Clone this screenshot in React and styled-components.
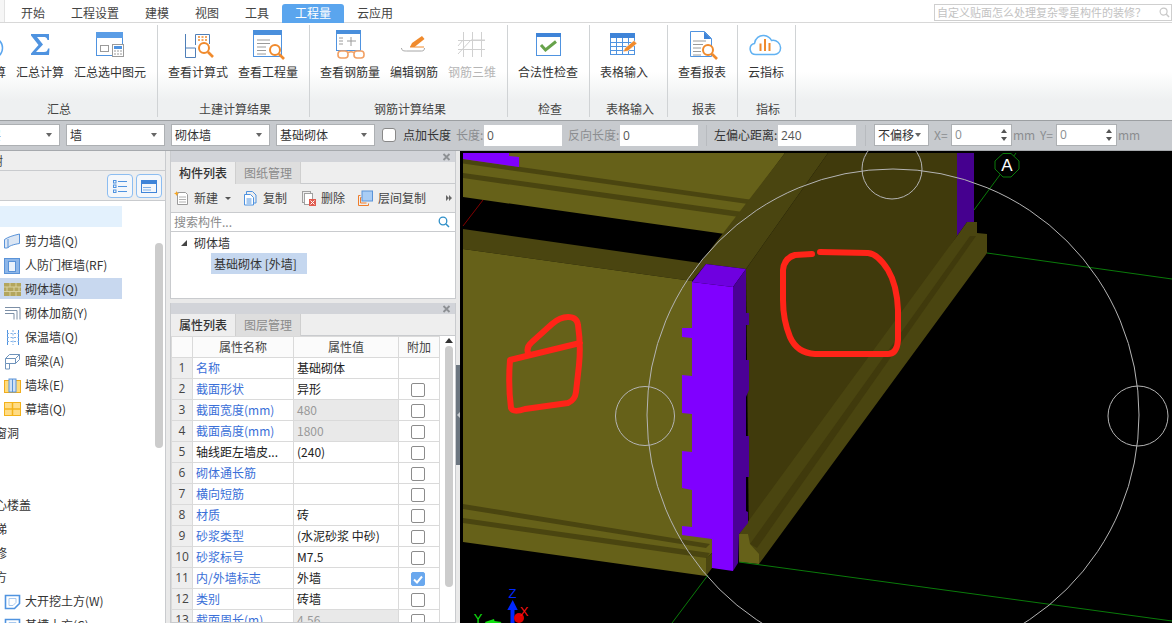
import React from 'react';
import styled, { createGlobalStyle } from 'styled-components';

const Global = createGlobalStyle`
  html, body { margin: 0; padding: 0; background: #fff; overflow: hidden; }
  * { box-sizing: border-box; }
  #root { width: 1172px; height: 623px; overflow: hidden; }
`;
const FONT = `"Noto Sans CJK SC", "Liberation Sans", sans-serif`;

const Page = styled.div`
  width: 1172px; height: 623px; display: flex; flex-direction: column; overflow: hidden;
  font: 12px/16px ${FONT}; color: #222; background: #e9e9e9;
`;
const MenuBar = styled.div`
  height: 23px; flex: none; display: flex; align-items: flex-start; padding-left: 8px; background: #fff;
  border-bottom: 1px solid #d8d8d8; position: relative;
  &::before { content: ''; position: absolute; left: 0; top: 0; width: 4px; height: 22px; background: #f6f6f6; border-right: 1px solid #e2e2e2; }
`;
const Tab = styled.div`
  padding: 0 13px; margin-top: 4px; height: 19px; line-height: 18px; font-size: 12px; color: ${p => (p.$active ? '#fff' : '#444')};
  background: ${p => (p.$active ? '#5aa5ee' : 'transparent')}; border-radius: 3px 3px 0 0;
`;
const HelpBox = styled.div`
  margin: 4px 0 0 auto; width: 238px; height: 17px; border: 1px solid #cfcfcf; background: #fff; color: #c2c2c2;
  font-size: 11px; line-height: 15px; padding-left: 2px; display: flex; justify-content: space-between; align-items: center; padding-right: 1px;
`;
const Ribbon = styled.div`
  height: 97px; flex: none; display: flex; margin-left: -52px; padding-bottom: 3px; padding-top: 2px; width: 1224px;
  background: linear-gradient(#fff 0, #fff 50%, #eef0f1 80%, #eef0f1 100%);
`;
const Group = styled.div`
  display: flex; flex-direction: column; border-right: 1px solid #d0d3d5; padding: 5px ${p => p.$pr ?? 11}px 0 10px;
`;
const GroupItems = styled.div`
  display: flex; gap: 10px; flex: 1;
`;
const Caption = styled.div`
  height: 19px; text-align: center; color: #444; font-size: 12px; line-height: 22px; padding-left: ${p => p.$pl ?? 4}px;
`;
const Item = styled.div`
  display: flex; flex-direction: column; align-items: center; width: ${p => p.$w}px;
  color: ${p => (p.$muted ? '#b5b5b5' : '#333')}; white-space: nowrap;
  svg { display: block; margin-bottom: 4px; flex: none; overflow: visible; }
`;
const OptionBar = styled.div`
  height: 31px; flex: none; display: flex; align-items: center; background: #c7cace; padding-bottom: 1px;
  border-top: 1px solid #9c9fa2; border-bottom: 1px solid #a6a9ad; white-space: nowrap;
`;
const Combo = styled.div`
  flex: none; width: ${p => p.$w || 99}px; height: 22px; margin-left: ${p => p.$ml ?? 6}px; background: #fff; border: 1px solid #adb0b3;
  display: flex; align-items: center; justify-content: space-between; padding: 0 7px 0 3px; color: #333;
  &::after { content: ''; border: 3px solid transparent; border-top: 4px solid #666; border-bottom: 0; }
`;
const Check = styled.div`
  flex: none; width: 14px; height: 14px; margin-left: 7px; border: 1px solid #888; border-radius: 3px; background: #fff;
`;
const Label = styled.span`
  flex: none; width: ${p => p.$w}px; margin-left: ${p => p.$ml}px; color: ${p => (p.$muted ? '#8b8d90' : '#333')};
`;
const TextInput = styled.div`
  flex: none; width: 78px; height: 21px; margin-left: ${p => p.$ml ?? 0}px; background: #fff; padding-left: 3px;
  font-family: "Open Sans", sans-serif; line-height: 21px; color: #555; font-size: 12px;
`;
const VRule = styled.div`
  flex: none; width: 1px; height: 21px; background: #b8bbbf; margin-left: ${p => p.$ml}px;
`;
const Spin = styled.div`
  flex: none; width: 61px; height: 22px; background: #fff; border: 1px solid #adb0b3; display: flex; align-items: center;
  justify-content: space-between; padding: 0 4px 0 3px; color: #8b8d90; font-family: "Open Sans", sans-serif;
`;
const SpinArrows = styled.div`
  display: flex; flex-direction: column; gap: 4px;
  i { display: block; border: 3px solid transparent; border-bottom: 4px solid #555; border-top: 0; }
  i + i { border-top: 4px solid #555; border-bottom: 0; }
`;
const Main = styled.div`
  flex: 1; min-height: 0; display: flex; background: #e9e9e9;
`;
const LeftPanel = styled.div`
  flex: none; width: 166px; margin-right: 4px; background: #fff; border-right: 1px solid #c9cbce; position: relative; overflow: hidden;
  display: flex; flex-direction: column;
`;
const LeftTitle = styled.div`
  height: 20px; flex: none; background: #eeeeee; border-bottom: 1px solid #c9cbce; padding-left: 0; color: #444; line-height: 19px;
  span { margin-left: -33px; display: block; }
`;
const LeftTools = styled.div`
  height: 30px; flex: none; background: #eeeeee; border-bottom: 1px solid #c9cbce; display: flex; justify-content: flex-end; gap: 3px; padding: 3px 3px 0 0;
`;
const ToolBtn = styled.div`
  width: 26px; height: 24px; border: 1px solid #8cbdf1; border-radius: 4px; background: #f4f7fb; display: flex; align-items: center; justify-content: center;
`;
const TreeList = styled.div`
  flex: 1; padding-top: 5px; overflow: hidden;
`;
const TreeRow = styled.div`
  height: 24px;
`;
const TreeBody = styled.div`
  width: 122px; height: 21px; display: flex; align-items: center; background: ${p => p.$bg || 'transparent'}; white-space: nowrap; color: #333;
  svg { flex: none; margin: 1px 3px 0 3px; }
`;
const TopName = styled.span`
  margin-left: -17px;
`;
const LeftThumb = styled.div`
  position: absolute; left: 155px; top: 92px; width: 8px; height: 205px; background: #cccccc; border-radius: 4px;
`;
const MidCol = styled.div`
  flex: none; width: 286px; display: flex; flex-direction: column; gap: 4px;
`;
const Panel = styled.div`
  flex: ${p => (p.$h ? 'none' : '1')}; height: ${p => (p.$h ? `${p.$h}px` : 'auto')}; min-height: 0; display: flex; flex-direction: column; background: #fff; border: solid #c9cbce; border-width: 0 1px 1px 1px; overflow: hidden;
`;
const PanelHead = styled.div`
  height: 11px; flex: none; background: #d2d4d9; display: flex; justify-content: flex-end; align-items: center; padding-right: 4px;
`;
const Tabs = styled.div`
  height: 22px; flex: none; background: #eeeeee; display: flex; border-bottom: 1px solid #c9cbce;
`;
const PanelTab = styled.div`
  width: 65px; text-align: center; line-height: 21px; height: 22px;
  background: ${p => (p.$active ? '#eeeeee' : '#dedede')}; color: ${p => (p.$active ? '#333' : '#8a8a8a')}; border-right: 1px solid #cfcfcf;
  font-weight: ${p => (p.$active ? 500 : 400)};
`;
const Actions = styled.div`
  height: 29px; flex: none; background: #eeeeee; border-bottom: 1px solid #c9cbce; display: flex; align-items: center; padding-left: 3px; color: #444; white-space: nowrap; position: relative;
`;
const Action = styled.div`
  display: flex; align-items: center; gap: 5px; margin-right: ${p => p.$mr}px;
`;
const DropCaret = styled.i`
  display: block; margin-left: 2px; border: 3px solid transparent; border-top: 3px solid #555; border-bottom: 0;
`;
const More = styled.svg`
  margin-left: auto; margin-right: 3px; flex: none;
`;
const SearchRow = styled.div`
  height: 19px; flex: none; display: flex; align-items: center; justify-content: space-between; padding: 0 5px 0 3px; color: #8a8a8a; border-bottom: 1px solid #c9cbce; background: #fff;
`;
const Tree = styled.div`
  flex: 1; padding-top: 2px; position: relative;
`;
const TreeNode = styled.div`
  height: 18px; display: flex; align-items: center; padding-left: 10px; gap: 7px; color: #333;
  i { display: block; width: 0; height: 0; border-left: 6px solid transparent; border-bottom: 6px solid #444; }
`;
const Selected = styled.div`
  margin: 1px 0 0 40px; width: 96px; height: 21px; background: #c5d7ef; padding-left: 3px; line-height: 21px; color: #333; white-space: nowrap;
`;
const TableWrap = styled.div`
  flex: 1; min-height: 0; display: flex; overflow: hidden;
`;
const Table = styled.table`
  flex: none; width: 268px; table-layout: fixed; border-collapse: collapse; align-self: flex-start;
  td, th { height: 21px; padding: 0 0 0 3px; border: 1px solid #dadada; font-weight: 400; white-space: nowrap; overflow: hidden; text-align: left; }
  th { text-align: center; padding: 0; color: #444; background: #fbfbfb; }
`;
const NumCell = styled.td`
  && { background: #eeeeee; color: #444; text-align: center; padding: 0; font-family: "Open Sans", sans-serif; }
`;
const NameCell = styled.td`
  color: ${p => (p.$plain ? '#222' : '#3a6fd8')};
`;
const ValueCell = styled.td`
  background: ${p => (p.$ro ? '#e9e9e9' : '#fff')}; color: ${p => (p.$ro ? '#999' : '#222')};
`;
const AddCell = styled.td`
  && { padding: 0 2px 0 0; text-align: center; }
`;
const Box = styled.span`
  display: inline-flex; vertical-align: middle; align-items: center; justify-content: center; width: 14px; height: 14px; border-radius: 2px; border: 1px solid ${p => (p.$on ? '#6aa8ee' : '#8c8c8c')}; background: ${p => (p.$on ? '#6aa8ee' : '#fff')};
`;
const ScrollCol = styled.div`
  flex: none; width: 16px; padding: 2px 0 0 5px; background: #fff;
  i { display: block; width: 0; height: 0; border: 4px solid transparent; border-bottom: 5px solid #333; border-top: 0; margin-bottom: 3px; }
`;
const ScrollThumb = styled.div`
  width: 8px; height: 241px; background: #cccccc; border-radius: 4px;
`;
const Splitter = styled.div`
  flex: none; width: 4px;
`;
const SplitGrip = styled.div`
  width: 4px; height: 100px; margin-top: 214px; background: #6c7680; display: flex; align-items: center; justify-content: flex-end;
  &::after { content: ''; display: block; border: 3px solid transparent; border-right: 3px solid #c8ccd0; border-left: 0; }
`;
const Canvas = styled.svg`
  flex: none; display: block; background: #000;
`;

/* ribbon icons – drawn in page coordinates via viewBox */
const RIcon = ({ cx, children }) => (
  <svg width="34" height="30" viewBox={`${cx - 17} 30 34 30`} fill="none">{children}</svg>
);
const B = '#4f93e0';
const O = '#f08a2c';
const G = '#9a9a9a';
const Lens = ({ x, y, r = 5 }) => (
  <g stroke={O} strokeWidth="2" fill="#fff">
    <circle cx={x} cy={y} r={r} />
    <path d={`M${x + r - 1} ${y + r - 1}l5 5`} strokeWidth="2.6" />
  </g>
);
const IconCloudCalc = () => (
  <RIcon cx={-18}><circle cx="-8" cy="48" r="10.500" stroke="#5aa5ee" strokeWidth="1.500" /></RIcon>
);
const IconSigma = () => (
  <RIcon cx={40}><path fill={B} d="M31 34H49V40H47.5C47 37.5 45.5 37 43 37H37L43 44.5 36 52H44C46.5 52 47.5 51 48 48.5H49.5L49 55H31V53.5L38.5 45 31 35.5Z" /></RIcon>
);
const IconSumSel = () => (
  <RIcon cx={110}>
    <rect x="96.5" y="32.5" width="26" height="23" stroke={B} />
    <rect x="96" y="32" width="27" height="6" fill="#5a9de6" />
    <rect x="100.5" y="45.5" width="8" height="6" stroke={G} />
    <rect x="112.5" y="44.5" width="11" height="12" fill="#fff" stroke={G} />
    <rect x="114" y="46" width="8" height="3" fill={B} />
    <path d="M114 51h2M117 51h2M120 51h2M114 54h2M117 54h2M120 54h2" stroke={G} />
  </RIcon>
);
const IconCalc = () => (
  <RIcon cx={198}>
    <path d="M185.5 34v23.5h10v-9.500h-10M195.500 45V34.500h14V44" stroke="#4f7fb8" />
    <path d="M198 37h2M201.500 37h2M205 37h2M198 40h2M201.500 40h2M205 40h2" stroke={O} strokeWidth="1.500" />
    <Lens x={204} y={48} />
  </RIcon>
);
const IconQty = () => (
  <RIcon cx={268}>
    <rect x="253.500" y="30.500" width="28" height="26" stroke={B} fill="#fff" />
    <rect x="253" y="30" width="29" height="5" fill="#4a8fdc" />
    <path d="M257 40h13M257 43.500h13M257 47h9M257 50.500h9M257 54h9" stroke={G} />
    <Lens x={275} y={50} />
  </RIcon>
);
const IconRebar = () => (
  <RIcon cx={350}>
    <rect x="336.500" y="30.500" width="24" height="20" stroke={B} fill="#fff" />
    <rect x="336" y="30" width="25" height="4" fill="#4a8fdc" />
    <path d="M339 38h4M339 41h4M339 44h4M351 37v9M347 41h9" stroke={G} />
    <g stroke="#f2a064" strokeWidth="1.600" fill="#fff">
      <rect x="338" y="51" width="10" height="7" rx="3" />
      <rect x="354" y="51" width="10" height="7" rx="3" />
      <path d="M348 52.500c2-1 4-1 6 0" fill="none" />
    </g>
  </RIcon>
);
const IconEdit = () => (
  <RIcon cx={414}>
    <path d="M401.500 48c0 3 3 3 5 3h15c2 0 3-1 3-3" stroke="#a6a6a6" />
    <path d="M410 47l2-4 10-7 2.500 3-10 8z" fill={O} />
    <path d="M410 47h14" stroke={O} strokeWidth="1" />
  </RIcon>
);
const Icon3D = () => (
  <RIcon cx={472}>
    <path d="M463.500 32v25M472.500 32v25M481.500 32v25M458 40.500h27M458 49.500h27M458 54l13-14 14 0M458 46l5-6" stroke="#d0d0d0" strokeWidth="1" />
  </RIcon>
);
const IconCheck = () => (
  <RIcon cx={548}>
    <rect x="536.500" y="33.500" width="24" height="22" stroke={B} fill="#fff" />
    <rect x="536" y="33" width="25" height="4" fill="#3f84d8" />
    <path d="M541 45l4.500 5 10.500-8.500" stroke="#67a24a" strokeWidth="3" />
  </RIcon>
);
const IconGrid = () => (
  <RIcon cx={624}>
    <rect x="610.500" y="33.500" width="24" height="21" stroke={B} fill="#fff" />
    <rect x="610" y="33" width="25" height="5" fill="#3f84d8" />
    <path d="M610 42.500h25M610 46.500h25M610 50.500h25M616.500 38v17M622.500 38v17M628.500 38v17" stroke={B} strokeWidth="1" />
    <path d="M623 52l2-4 9-7.500 3 3-9 7.500z" fill={O} stroke="#fff" strokeWidth=".6" />
  </RIcon>
);
const IconReport = () => (
  <RIcon cx={702}>
    <path d="M690.500 31.500h14l7 7v18h-21z" stroke={B} fill="#fff" />
    <path d="M704 31.500l7.500 7.500h-7.500z" fill="#3f84d8" />
    <path d="M693 41h13M693 44.500h10M693 48h8M693 51.500h8M693 55h8" stroke={G} />
    <Lens x={708} y={50} />
  </RIcon>
);
const IconCloud = () => (
  <RIcon cx={766}>
    <path d="M756 54.500c-7 0-8-9.500-1.500-11 .5-5 5-8.500 9.500-8 4 .5 6 2 7.500 5 5-1 9.500 3 9 8 0 3.500-3 6-6 6z" stroke="#62b2f2" strokeWidth="1.500" />
    <path d="M760.500 43.500v7.500M765 39v12M769.500 43v8" stroke={O} strokeWidth="2" />
  </RIcon>
);

/* tree icons */
const TI = ({ children }) => <svg width="19" height="20" viewBox="0 0 19 20" fill="none">{children}</svg>;
const Shear = () => (<TI><path d="M1.500 8.500C5 6 10 4.500 16.500 3v9.500C10 13.500 6 15 4.500 17H1.500z" fill="#dbe6f4" stroke="#5a93d8" /><path d="M5 8v9" stroke="#5a93d8" /></TI>);
const Civil = () => (<TI><rect x="1.500" y="3.500" width="15" height="15" fill="#8db6e8" stroke="#5a93d8" /><rect x="5.500" y="6.500" width="7" height="10" fill="#eaf2fb" stroke="#5a93d8" /></TI>);
const Brick = () => (<TI><rect x="1" y="4" width="17" height="13" fill="#b3a65e" /><path d="M1 8h17M1 12.500h17M7 4v4M13 4v4M4 8v4.500M11 8v4.500M16 8v4.500M7 12.500V17M13 12.500V17" stroke="#d8d0a0" /></TI>);
const Rebar = () => (<TI><path d="M2 4.500h15v12M2 7.500h12v9M2 10.500h9v6" stroke="#7c8fa6" /></TI>);
const Insul = () => (<TI><path d="M4.500 3v15M15.500 3v15" stroke="#4f93e0" /><path d="M10 3v15M4 6.500h12M4 10.500h12M4 14.500h12" stroke="#7fb0e8" strokeDasharray="2 1.500" /></TI>);
const Beam = () => (<TI><path d="M2.500 7.500l4-4h10v5l-4 4h-10z" fill="#fff" stroke="#6f93bb" /><path d="M2.500 7.500h10l4-4M12.500 7.500v5M2.500 12.500V18h4v-5.500" stroke="#6f93bb" /></TI>);
const Pier = () => (<TI><rect x="1.500" y="5.500" width="16" height="12" fill="#ffdb7a" stroke="#f0ac1c" /><rect x="6" y="4" width="7" height="13" fill="#cfe1f5" stroke="#5a93d8" /><path d="M9.500 4v13" stroke="#5a93d8" /></TI>);
const Curtain = () => (<TI><rect x="1.500" y="3.500" width="16" height="13" fill="#ffdc85" stroke="#f3b21a" /><path d="M9.500 3v14M1 10h17" stroke="#f3b21a" strokeWidth="1.500" /></TI>);
const Pit = () => (<TI><path d="M2.500 4.500h14v8l-5 5h-9z" fill="#fff" stroke="#4f93e0" strokeWidth="1.600" /><path d="M6 7.500h7v4l-3 3H6z" stroke="#a9c9ee" /></TI>);

const List = [
  { blank: true, bg: '#e3f1fd' },
  { icon: <Shear />, t: '剪力墙(Q)' },
  { icon: <Civil />, t: '人防门框墙(RF)' },
  { icon: <Brick />, t: '砌体墙(Q)', bg: '#c8d8ef' },
  { icon: <Rebar />, t: '砌体加筋(Y)' },
  { icon: <Insul />, t: '保温墙(Q)' },
  { icon: <Beam />, t: '暗梁(A)' },
  { icon: <Pier />, t: '墙垛(E)' },
  { icon: <Curtain />, t: '幕墙(Q)' },
  { top: '门窗洞' },
  { blank: true },
  { blank: true },
  { top: '空心楼盖' },
  { top: '楼梯' },
  { top: '装修' },
  { top: '土方' },
  { icon: <Pit />, t: '大开挖土方(W)' },
  { icon: <Pit />, t: '基槽土方(C)' },
];

const Rows = [
  ['名称', '基础砌体'],
  ['截面形状', '异形'],
  ['截面宽度(mm)', '480', true],
  ['截面高度(mm)', '1800', true],
  ['轴线距左墙皮...', '(240)', false, true],
  ['砌体通长筋', ''],
  ['横向短筋', ''],
  ['材质', '砖'],
  ['砂浆类型', '(水泥砂浆 中砂)'],
  ['砂浆标号', 'M7.5'],
  ['内/外墙标志', '外墙', false, false, true],
  ['类别', '砖墙'],
  ['截面周长(m)', '4.56', true],
];

const CloseX = () => (
  <svg width="9" height="8" viewBox="0 0 9 8"><path d="M1.500 1l6 6M7.500 1l-6 6" stroke="#8d9094" strokeWidth="1.800" /></svg>
);
const SearchGlass = ({ c = '#2f8fc8', s = 12 }) => (
  <svg width={s} height={s} viewBox="0 0 12 12" fill="none"><circle cx="5" cy="5" r="3.800" stroke={c} strokeWidth="1.300" /><path d="M8 8l3 3" stroke={c} strokeWidth="1.500" /></svg>
);

const OLIVE = '#666119';
const MID = '#4a4510';
const DARK = '#403a0c';
const PURPLE = '#8000ff';
const PSIDE = '#4b0096';
const LATIN = `"Liberation Sans", sans-serif`;

const Scene = () => (
  <Canvas width="712" height="472" viewBox="460 151 712 472" fill="none">
    {/* back wall */}
    <polygon fill={OLIVE} points="463,153 785,153 725,234 463,197" />
    <polygon fill={MID} points="463,159 463,163.500 748,204 753,200" />
    <polygon fill={MID} points="463,173 463,178 739,217 743,212" />
    <polygon fill={PURPLE} points="463,153 509,153 509,156 519,157 519,167 463,159" />
    {/* top band + right wall */}
    <polygon fill={DARK} points="828,153 957,153 957,236 749,548 746,269" />
    <polygon fill={MID} points="785,153 828,153 746,269 706,264 692,281 463,249 463,229 700,263" />
    <polygon fill="#45008f" points="957,153 974,153 974,222 967,222 957,236" />
    <polygon fill={MID} points="967,222 977,222 977,233 987,234 987,253 759,564 749,545 739,534 957,236" />
    <polygon fill={DARK} points="970,236 976,236 757,548 750,544" />
    {/* front wall */}
    <polygon fill={OLIVE} points="463,249 692,281 712,540 712,553 706,558 706,576 463,542" />
    <polygon fill={MID} points="463,504 463,509 706,548 710,544" />
    <polygon fill={MID} points="463,518 463,523 706,558 710,553" />
    <polygon fill={MID} points="706,558 712,553 712,568 706,576" />
    {/* purple column */}
    <polygon fill="#6f00e0" points="706,264 746,269 733,287 692,282" />
    <polygon fill={PSIDE} points="746,269 733,287 733,571 738,563 739,534 748,523 748,512 746,511 746,477 749,477 749,436 746,436 746,397 749,390 749,360 746,360 746,325 749,325 749,313 746,313" />
    <polygon fill={PURPLE} points="692,282 733,287 733,571 712,568 712,539 682,535 682,526 692,527 692,490 682,488 682,451 692,452 692,414 682,413 682,375 692,376 692,338 682,337 682,328 692,328" />
    {/* right base front */}
    <polygon fill={OLIVE} points="739,534 748,534 750,544 759,554 759,564 739,562" />
    {/* axes */}
    <g stroke="#0a7a0a" strokeWidth="1">
      <path d="M739 562L1172 621" />
      <path d="M987 253L1172 279" />
      <path d="M708 575L672 623" />
      <path d="M974 210L1016 153" />
      <polygon points="1003,153.500 1011,153.500 1019,161 1019,169 1011,177 1003,177 995,169 995,161" fill="#000" />
    </g>
    <text x="1007" y="171" fontFamily={LATIN} fontSize="17" fill="#fff" textAnchor="middle">A</text>
    <path d="M483 200L463 226" stroke="#800000" />
    {/* circles */}
    <g stroke="#b4b4b4" strokeWidth="1">
      <circle cx="893" cy="415" r="246" />
      <circle cx="645" cy="416" r="29.500" />
      <circle cx="892" cy="169" r="30" />
      <circle cx="1138" cy="416" r="30" />
    </g>
    {/* redline */}
    <g stroke="#ff2418" strokeWidth="6" strokeLinecap="round" strokeLinejoin="round">
      <path d="M528 353Q526 347 532 342L552 324Q560 317 568 317 577 317 578 325 581 345 579 365L576 392Q575 400 568 403L525 409Q513 413 511 408 508 385 510 360L580 343" />
      <path d="M812 254L795 255Q784 258 783 270L783 300Q783 320 790 337 797 353 815 354L888 354Q897 354 898 340L898 310Q897 285 888 270 878 254 868 253L820 252" />
    </g>
    {/* view cube */}
    <text x="512.500" y="598" fontFamily={LATIN} fontSize="13" fill="#0028ff" textAnchor="middle">Z</text>
    <path d="M512.700 600l5 10h-3.200v13h-4v-13h-3.200z" fill="#0028ff" />
    <circle cx="519" cy="618" r="5" fill="#e00000" />
    <text x="524" y="616" fontFamily={LATIN} fontSize="13" fill="#ff1010" textAnchor="middle">X</text>
    <text x="478" y="623" fontFamily={LATIN} fontSize="13" fill="#10e010" textAnchor="middle">Y</text>
    <path d="M485 622l9-3 .5 2 7 1-1 1h-15z" fill="#10e010" />
  </Canvas>
);

export default function App() {
  return (
    <Page>
      <Global />
      <MenuBar>
        <Tab>开始</Tab>
        <Tab>工程设置</Tab>
        <Tab>建模</Tab>
        <Tab>视图</Tab>
        <Tab>工具</Tab>
        <Tab $active>工程量</Tab>
        <Tab>云应用</Tab>
        <HelpBox>自定义贴面怎么处理复杂零星构件的装修？<SearchGlass c="#c8c8c8" s={11} /></HelpBox>
      </MenuBar>
      <Ribbon>
        <Group>
          <GroupItems>
            <Item $w={48}><IconCloudCalc />云端计算</Item>
            <Item $w={48}><IconSigma />汇总计算</Item>
            <Item $w={72}><IconSumSel />汇总选中图元</Item>
          </GroupItems>
          <Caption $pl={14}>汇总</Caption>
        </Group>
        <Group>
          <GroupItems>
            <Item $w={60}><IconCalc />查看计算式</Item>
            <Item $w={60}><IconQty />查看工程量</Item>
          </GroupItems>
          <Caption>土建计算结果</Caption>
        </Group>
        <Group>
          <GroupItems>
            <Item $w={60}><IconRebar />查看钢筋量</Item>
            <Item $w={48}><IconEdit />编辑钢筋</Item>
            <Item $w={48} $muted><Icon3D />钢筋三维</Item>
          </GroupItems>
          <Caption>钢筋计算结果</Caption>
        </Group>
        <Group>
          <GroupItems><Item $w={60}><IconCheck />合法性检查</Item></GroupItems>
          <Caption>检查</Caption>
        </Group>
        <Group $pr={13}>
          <GroupItems><Item $w={48}><IconGrid />表格输入</Item></GroupItems>
          <Caption $pl={6}>表格输入</Caption>
        </Group>
        <Group>
          <GroupItems><Item $w={48}><IconReport />查看报表</Item></GroupItems>
          <Caption>报表</Caption>
        </Group>
        <Group>
          <GroupItems><Item $w={36}><IconCloud />云指标</Item></GroupItems>
          <Caption>指标</Caption>
        </Group>
      </Ribbon>
      <OptionBar>
        <Combo $ml={-39}>基础层</Combo>
        <Combo>墙</Combo>
        <Combo>砌体墙</Combo>
        <Combo>基础砌体</Combo>
        <Check />
        <Label $ml={7} $w={48}>点加长度</Label>
        <Label $ml={5} $w={28} $muted>长度:</Label>
        <TextInput>0</TextInput>
        <Label $ml={6} $w={52} $muted>反向长度:</Label>
        <TextInput>0</TextInput>
        <VRule $ml={8} />
        <Label $ml={7} $w={64}>左偏心距离:</Label>
        <TextInput>240</TextInput>
        <VRule $ml={9} />
        <Combo $w={55} $ml={8}>不偏移</Combo>
        <Label $ml={5} $w={17} $muted>X=</Label>
        <Spin>0<SpinArrows><i /><i /></SpinArrows></Spin>
        <Label $ml={1} $w={27} $muted>mm</Label>
        <Label $ml={0} $w={16} $muted>Y=</Label>
        <Spin>0<SpinArrows><i /><i /></SpinArrows></Spin>
        <Label $ml={1} $w={27} $muted>mm</Label>
      </OptionBar>
      <Main>
        <LeftPanel>
          <LeftTitle><span>导航树</span></LeftTitle>
          <LeftTools>
            <ToolBtn>
              <svg width="14" height="13" viewBox="0 0 14 13" fill="none"><path d="M5 1.500h9M5 6.500h9M5 11.500h9" stroke="#4f93e0" /><rect x=".5" y=".5" width="2.500" height="2.500" stroke="#4f93e0" /><rect x=".5" y="5" width="2.500" height="2.500" stroke="#4f93e0" /><rect x=".5" y="10" width="2.500" height="2.500" stroke="#4f93e0" /></svg>
            </ToolBtn>
            <ToolBtn>
              <svg width="16" height="13" viewBox="0 0 16 13" fill="none"><rect x=".5" y=".5" width="15" height="12" stroke="#3f84d8" /><rect x="0" y="0" width="16" height="4" fill="#3f84d8" /><path d="M2 7.500h8M2 10h8" stroke="#7fb0e8" /></svg>
            </ToolBtn>
          </LeftTools>
          <TreeList>
            {List.map((r, i) => (
              <TreeRow key={i}>
                <TreeBody $bg={r.bg}>
                  {r.icon}
                  {r.t}
                  {r.top && <TopName>{r.top}</TopName>}
                </TreeBody>
              </TreeRow>
            ))}
          </TreeList>
          <LeftThumb />
        </LeftPanel>
        <MidCol>
          <Panel $h={148}>
            <PanelHead><CloseX /></PanelHead>
            <Tabs>
              <PanelTab $active>构件列表</PanelTab>
              <PanelTab>图纸管理</PanelTab>
            </Tabs>
            <Actions>
              <Action $mr={12}>
                <svg width="15" height="15" viewBox="0 0 15 15" fill="none"><path d="M3.500 1.500h8l2 2v10h-10z" fill="#fff" stroke="#9a9a9a" /><path d="M5 6h7M5 8.500h7M5 11h7" stroke="#b0b0b0" /><path d="M2.500 0l.8 1.700 1.700.8-1.700.8-.8 1.700-.8-1.700L0 2.500l1.700-.8z" fill="#f5a623" /></svg>
                <span>新建</span>
                <DropCaret />
              </Action>
              <Action $mr={14}>
                <svg width="15" height="16" viewBox="0 0 15 16" fill="none"><path d="M3.500 4.500v-3h6l3.500 3.500v8h-3" stroke="#4f93e0" /><path d="M1.500 4.500h6l3 3v7.500h-9z" fill="#fff" stroke="#4f93e0" /><path d="M3.500 9h5M3.500 11h5M3.500 13h5" stroke="#4f93e0" /></svg>
                <span>复制</span>
              </Action>
              <Action $mr={13}>
                <svg width="15" height="16" viewBox="0 0 15 16" fill="none"><rect x="1.500" y="1.500" width="8" height="11" stroke="#a0a0a0" /><rect x="3.500" y="3.500" width="8" height="11" fill="#fff" stroke="#a0a0a0" /><rect x="8" y="9" width="7" height="7" fill="#e05a4e" /><path d="M9.500 10.500l4 4M13.500 10.500l-4 4" stroke="#fff" /></svg>
                <span>删除</span>
              </Action>
              <Action $mr={0}>
                <svg width="15" height="16" viewBox="0 0 15 16" fill="none"><path d="M.5 15.500V5.500h2M.5 15.500h10v-2M2.500 13V7.500h1M2.500 13h6" stroke="#ee7d2c" /><rect x="4" y="1" width="10.500" height="10" fill="#a9cdf5" stroke="#5a93d8" /></svg>
                <span>层间复制</span>
              </Action>
              <More width="6" height="6" viewBox="0 0 6 6"><path d="M0 0l3 3-3 3zM3 0l3 3-3 3z" fill="#666" /></More>
            </Actions>
            <SearchRow>搜索构件...<SearchGlass /></SearchRow>
            <Tree>
              <TreeNode><i />砌体墙</TreeNode>
              <Selected>基础砌体 [外墙]</Selected>
            </Tree>
          </Panel>
          <Panel>
            <PanelHead><CloseX /></PanelHead>
            <Tabs>
              <PanelTab $active>属性列表</PanelTab>
              <PanelTab>图层管理</PanelTab>
            </Tabs>
            <TableWrap>
              <Table>
                <colgroup>
                  <col width="21" /><col width="101" /><col width="105" /><col width="41" />
                </colgroup>
                <thead>
                  <tr><th /><th>属性名称</th><th>属性值</th><th>附加</th></tr>
                </thead>
                <tbody>
                  {Rows.map((r, i) => (
                    <tr key={i}>
                      <NumCell>{i + 1}</NumCell>
                      <NameCell $plain={r[3]}>{r[0]}</NameCell>
                      <ValueCell $ro={r[2]}>{r[1]}</ValueCell>
                      <AddCell>
                        {i > 0 && (
                          <Box $on={r[4]}>
                            {r[4] && <svg width="10" height="9" viewBox="0 0 10 9" fill="none"><path d="M1 4.500l3 3 5-6" stroke="#fff" strokeWidth="2" /></svg>}
                          </Box>
                        )}
                      </AddCell>
                    </tr>
                  ))}
                </tbody>
              </Table>
              <ScrollCol>
                <i />
                <ScrollThumb />
              </ScrollCol>
            </TableWrap>
          </Panel>
        </MidCol>
        <Splitter><SplitGrip /></Splitter>
        <Scene />
      </Main>
    </Page>
  );
}
